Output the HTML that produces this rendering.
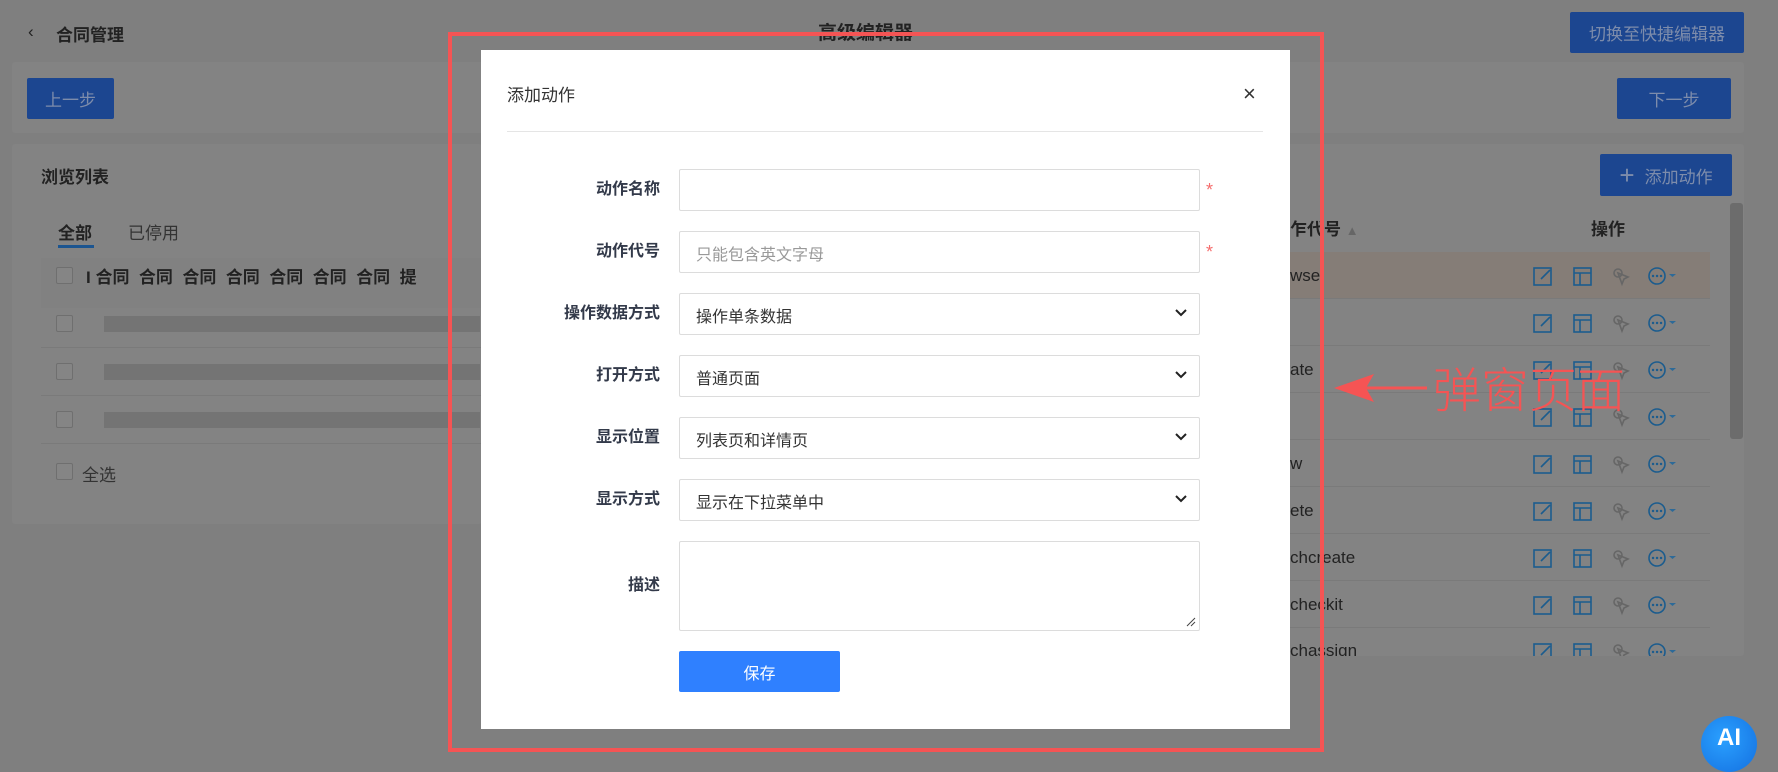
<!DOCTYPE html>
<html><head><meta charset="utf-8"><style>
*{box-sizing:border-box;margin:0;padding:0}
body{width:1778px;height:768px;overflow:hidden;background:#7f7f7f;font-family:"Liberation Sans","Noto Sans CJK SC",sans-serif;position:relative;color:#1f1f1f}
.a{position:absolute}
.btn{position:absolute;background:#1c4690;color:#7d8cab;font-size:17px;display:flex;align-items:center;justify-content:center;border-radius:2px}
.panel{position:absolute;background:#838383;border-radius:3px}
.cb{position:absolute;width:17px;height:17px;border:1px solid #6f6f6f;border-radius:2px;background:#858585}
.blur{position:absolute;height:16px;background:#747474}
.row{position:absolute;left:1290px;width:420px;height:47px;border-bottom:1px solid #7a7a7a;font-size:17px;color:#222;line-height:47px}
.ic{position:absolute}
.lbl{position:absolute;right:1118px;font-size:16px;font-weight:bold;color:#333a4a;text-align:right;white-space:nowrap;line-height:20px}
.inp{position:absolute;left:679px;width:521px;height:42px;border:1px solid #dcdcdc;border-radius:2px;background:#fff;font-size:16px;color:#333;padding-left:16px;display:flex;align-items:center;padding-top:2px}
.inp svg{position:absolute;right:11px;top:14px}
.star{position:absolute;left:1206px;color:#f56c6c;font-size:18px;line-height:20px}
</style></head><body>
<div class="a" style="left:28px;top:22px;font-size:17px;color:#222">&#8249;</div>
<div class="a" style="left:56px;top:21px;font-size:17px;font-weight:bold;color:#222">合同管理</div>
<div class="a" style="left:818px;top:18px;font-size:19px;font-weight:bold;color:#222">高级编辑器</div>
<div class="btn" style="left:1570px;top:12px;width:174px;height:41px;font-size:17px">切换至快捷编辑器</div>
<div class="panel" style="left:12px;top:62px;width:1732px;height:71px"></div>
<div class="btn" style="left:27px;top:78px;width:87px;height:41px">上一步</div>
<div class="btn" style="left:1617px;top:78px;width:114px;height:41px">下一步</div>
<div class="panel" style="left:12px;top:144px;width:470px;height:380px"></div>
<div class="panel" style="left:1280px;top:144px;width:464px;height:512px"></div>
<div class="a" style="left:41px;top:163px;font-size:17px;font-weight:bold;color:#222">浏览列表</div>
<div class="btn" style="left:1600px;top:154px;width:132px;height:42px"><span style="font-size:26px;margin-right:10px">+</span>添加动作</div>
<div class="a" style="left:58px;top:219px;font-size:17px;font-weight:bold;color:#222">全部</div>
<div class="a" style="left:58px;top:245px;width:36px;height:3px;background:#1c5590"></div>
<div class="a" style="left:128px;top:219px;font-size:17px;color:#333">已停用</div>
<div class="a" style="left:41px;top:258px;width:440px;height:50px;background:#818181"></div>
<div class="cb" style="left:56px;top:267px"></div>
<div class="a" style="left:86px;top:263px;font-size:17px;font-weight:bold;color:#222;white-space:nowrap">I&nbsp;合同&nbsp;&nbsp;合同&nbsp;&nbsp;合同&nbsp;&nbsp;合同&nbsp;&nbsp;合同&nbsp;&nbsp;合同&nbsp;&nbsp;合同&nbsp;&nbsp;提</div>
<div class="cb" style="left:56px;top:315px"></div><div class="blur" style="left:104px;top:316px;width:376px"></div>
<div class="cb" style="left:56px;top:363px"></div><div class="blur" style="left:104px;top:364px;width:376px"></div>
<div class="cb" style="left:56px;top:411px"></div><div class="blur" style="left:104px;top:412px;width:376px"></div>
<div class="a" style="left:41px;top:347px;width:440px;height:1px;background:#7a7a7a"></div>
<div class="a" style="left:41px;top:395px;width:440px;height:1px;background:#7a7a7a"></div>
<div class="a" style="left:41px;top:443px;width:440px;height:1px;background:#7a7a7a"></div>
<div class="cb" style="left:56px;top:463px"></div>
<div class="a" style="left:82px;top:461px;font-size:17px;color:#333">全选</div>
<div class="a" style="left:1290px;top:215px;font-size:17px;font-weight:bold;color:#222">乍代号 <span style="color:#666;font-size:13px">&#9650;</span></div>
<div class="a" style="left:1591px;top:215px;font-size:17px;font-weight:bold;color:#222">操作</div>
<div class="a" style="left:1730px;top:203px;width:13px;height:236px;background:#6c6c6c;border-radius:3px"></div>
<div class="row" style="top:252px;background:#857d77">wse</div>
<div class="row" style="top:299px"></div>
<div class="row" style="top:346px">ate</div>
<div class="row" style="top:393px"></div>
<div class="row" style="top:440px">w</div>
<div class="row" style="top:487px">ete</div>
<div class="row" style="top:534px">chcreate</div>
<div class="row" style="top:581px">checkit</div>
<div class="row" style="top:628px;height:28px;overflow:hidden;border:0;line-height:46px">chassign</div>
<svg class="ic" style="left:1530px;top:252px" width="170" height="404">
<g id="r" fill="none" stroke-width="1.6">
<rect x="4" y="16" width="17" height="17" stroke="#1b5c8e"/><path d="M11 27l9-9" stroke="#1b5c8e"/>
<rect x="44" y="16" width="17" height="17" stroke="#1b5c8e"/><path d="M44 21h17M50 21v12" stroke="#1b5c8e"/>
<circle cx="88" cy="21" r="4" stroke="#666"/><path d="M88 21l10 4-4 2-2 5z" stroke="#666"/>
<circle cx="127" cy="24" r="8" stroke="#1b5c8e"/><path d="M123 24h.1M127 24h.1M131 24h.1" stroke="#1b5c8e" stroke-width="2.4" stroke-linecap="round"/>
<path d="M139 22h7l-3.5 3z" fill="#2d6a98" stroke="none"/>
</g>
<use href="#r" y="47"/><use href="#r" y="94"/><use href="#r" y="141"/><use href="#r" y="188"/><use href="#r" y="235"/><use href="#r" y="282"/><use href="#r" y="329"/><use href="#r" y="376"/>
</svg>
<div class="a" style="left:481px;top:50px;width:809px;height:679px;background:#fff"></div>
<div class="a" style="left:507px;top:81px;font-size:17px;color:#333">添加动作</div>
<div class="a" style="left:1243px;top:83px;font-size:22px;color:#333;line-height:1">×</div>
<div class="a" style="left:507px;top:131px;width:756px;height:1px;background:#e5e5e5"></div>
<div class="lbl" style="top:180px">动作名称</div><div class="inp" style="top:169px"></div><div class="star" style="top:180px">*</div>
<div class="lbl" style="top:242px">动作代号</div><div class="inp" style="top:231px;color:#999">只能包含英文字母</div><div class="star" style="top:242px">*</div>
<div class="lbl" style="top:304px">操作数据方式</div><div class="inp" style="top:293px">操作单条数据<svg width="14" height="10"><path d="M2 2l5 5 5-5" fill="none" stroke="#222" stroke-width="2"/></svg></div>
<div class="lbl" style="top:366px">打开方式</div><div class="inp" style="top:355px">普通页面<svg width="14" height="10"><path d="M2 2l5 5 5-5" fill="none" stroke="#222" stroke-width="2"/></svg></div>
<div class="lbl" style="top:428px">显示位置</div><div class="inp" style="top:417px">列表页和详情页<svg width="14" height="10"><path d="M2 2l5 5 5-5" fill="none" stroke="#222" stroke-width="2"/></svg></div>
<div class="lbl" style="top:490px">显示方式</div><div class="inp" style="top:479px">显示在下拉菜单中<svg width="14" height="10"><path d="M2 2l5 5 5-5" fill="none" stroke="#222" stroke-width="2"/></svg></div>
<div class="lbl" style="top:576px">描述</div><div class="inp" style="top:541px;height:90px"><svg width="10" height="10" style="top:auto;bottom:3px;right:3px"><path d="M1 9L9 1M5 9L9 5" stroke="#444"/></svg></div>
<div class="a" style="left:679px;top:651px;width:161px;height:41px;background:#2f80ff;border-radius:2px;color:#fff;font-size:16px;display:flex;align-items:center;justify-content:center">保存</div>
<div class="a" style="left:448px;top:32px;width:876px;height:720px;border:4px solid #f55454"></div>
<svg class="a" style="left:1330px;top:370px" width="100" height="40"><path d="M97 18H35" stroke="#f55454" stroke-width="3"/><path d="M4 18L44 4L36 18L44 32z" fill="#f55454"/></svg>
<div class="a" style="left:1433px;top:362px;font-size:48px;color:#f55454;line-height:1;font-family:'Noto Sans CJK SC',sans-serif;font-weight:300">弹窗页面</div>
<div class="a" style="left:1701px;top:716px;width:56px;height:56px;border-radius:50%;background:radial-gradient(circle at 40% 40%,#2aa0ff,#1470e0);color:#fff;font-weight:bold;font-size:24px;display:flex;align-items:center;justify-content:center;padding-bottom:12px">AI</div>
</body></html>
